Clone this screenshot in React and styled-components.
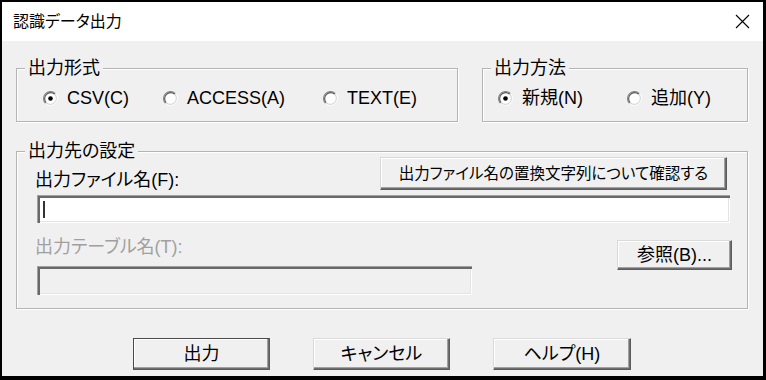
import React from 'react'
import styled, { createGlobalStyle } from 'styled-components'

const Global = createGlobalStyle`
  html, body {
    margin: 0;
    padding: 0;
    background: #f0f0f0;
  }
  * {
    box-sizing: border-box;
  }
`

const Window = styled.div`
  width: 766px;
  height: 380px;
  display: flex;
  flex-direction: column;
  background: #f0f0f0;
  border-style: solid;
  border-color: #000;
  border-width: 2px 3px 4px 2px;
  font-family: "Liberation Sans", "Noto Sans CJK JP", sans-serif;
  font-feature-settings: "palt";
  font-size: 18px;
  line-height: 20px;
  color: #000;
`

const TitleBar = styled.div`
  flex: none;
  height: 39px;
  display: flex;
  align-items: center;
  justify-content: space-between;
  padding: 0 13px 0 11px;
  background: #fff;
  font-size: 16px;
`

const Body = styled.div`
  flex: 1;
  display: flex;
  flex-direction: column;
  padding: 27px 15px 0 14px;
`

const TopRow = styled.div`
  display: flex;
  gap: 24px;
`

// etched group box; --pad lets the legend keep its place whatever the inner padding
const Group = styled.section`
  --pad: ${p => p.$left || 0}px;
  display: flex;
  flex-direction: column;
  border: 1px solid #b4b4b4;
  box-shadow: inset 1px 1px 0 #fff, 1px 1px 0 #fff;
  width: ${p => (p.$w ? `${p.$w}px` : 'auto')};
  flex: ${p => (p.$grow ? '1' : 'none')};
  margin-top: ${p => p.$top || 0}px;
  padding: 0 ${p => p.$right || 0}px ${p => p.$bottom || 0}px var(--pad);
`

const Legend = styled.div`
  align-self: flex-start;
  height: 20px;
  white-space: nowrap;
  margin: -11px 0 0 calc(8px - var(--pad));
  padding: 0 3px;
  background: #f0f0f0;
`

const RadioRow = styled.div`
  display: flex;
  align-items: center;
  margin-top: 10px;
  height: 20px;
`

const Option = styled.label`
  display: flex;
  align-items: center;
  gap: 9px;
  height: 20px;
  white-space: nowrap;
  width: ${p => (p.$w ? `${p.$w}px` : 'auto')};
  flex: none;
`

const FieldRow = styled.div`
  display: flex;
  align-items: flex-end;
  justify-content: space-between;
  margin-top: -4px;
  height: 33px;
`

const Label = styled.div`
  height: 20px;
  white-space: nowrap;
  margin-left: -2px;
  color: ${p => (p.$disabled ? '#a0a0a0' : '#000')};
`

const Button = styled.button`
  flex: none;
  width: ${p => p.$w}px;
  height: ${p => p.$h}px;
  margin: ${p => p.$m || 0};
  padding: 0;
  font: inherit;
  font-size: ${p => p.$fs || 18}px;
  font-feature-settings: "palt";
  white-space: nowrap;
  color: #000;
  background: #f0f0f0;
  border: ${p => (p.$default ? '1px solid #4a4a4a' : '1px solid #dadada')};
  border-right-color: #5c5c5c;
  border-bottom-color: #5c5c5c;
  box-shadow:
    inset -1px -1px 0 #6d6d6d,
    inset -2px -2px 0 #a0a0a0,
    inset 1px 1px 0 #fff;
`

const Field = styled.div`
  height: ${p => p.$h}px;
  width: ${p => (p.$w ? `${p.$w}px` : 'auto')};
  margin-top: ${p => p.$top || 0}px;
  display: flex;
  align-items: center;
  padding-left: 6px;
  background: ${p => (p.$disabled ? '#f0f0f0' : '#fff')};
  box-shadow:
    inset 1px 1px 0 #a0a0a0,
    inset 3px 3px 0 #696969,
    inset -1px -1px 0 #fff,
    inset -2px -2px 0 #e3e3e3;
`

const Caret = styled.span`
  width: 2px;
  height: 17px;
  background: #333;
`

const TableRow = styled.div`
  display: flex;
  align-items: flex-start;
  justify-content: space-between;
  margin-top: 14px;
`

const TableCol = styled.div`
  display: flex;
  flex-direction: column;
  gap: 9px;
`

const Actions = styled.div`
  display: flex;
  justify-content: center;
  gap: 43px;
  margin-top: 29px;
`

const RadioMark = ({ checked }) => (
  <svg width="15" height="15" viewBox="0 0 15 15">
    <circle cx="7.5" cy="7.5" r="6.5" fill="#fff" />
    <path d="M2.55 12.45 A7 7 0 0 1 12.45 2.55" fill="none" stroke="#8a8a8a" strokeWidth="1.1" />
    <path d="M12.45 2.55 A7 7 0 0 1 2.55 12.45" fill="none" stroke="#fcfcfc" />
    <path d="M3.26 11.74 A6 6 0 0 1 11.74 3.26" fill="none" stroke="#555" strokeWidth="1.1" />
    <path d="M11.74 3.26 A6 6 0 0 1 3.26 11.74" fill="none" stroke="#cfcfcf" />
    {checked && <circle cx="7.5" cy="7.5" r="2.3" fill="#000" />}
  </svg>
)

const CloseIcon = () => (
  <svg width="15" height="15" viewBox="0 0 15 15">
    <path d="M1 1 L14 14 M14 1 L1 14" stroke="#000" strokeWidth="1.1" fill="none" />
  </svg>
)

const Radio = ({ checked, w, children }) => (
  <Option $w={w}>
    <RadioMark checked={checked} />
    <span>{children}</span>
  </Option>
)

export default function App() {
  return (
    <>
      <Global />
      <Window>
        <TitleBar>
          <span>認識データ出力</span>
          <CloseIcon />
        </TitleBar>
        <Body>
          <TopRow>
            <Group $w={442} $left={26} $bottom={13}>
              <Legend>出力形式</Legend>
              <RadioRow>
                <Radio checked w={120}>CSV(C)</Radio>
                <Radio w={160}>ACCESS(A)</Radio>
                <Radio>TEXT(E)</Radio>
              </RadioRow>
            </Group>
            <Group $grow $left={15} $bottom={13}>
              <Legend>出力方法</Legend>
              <RadioRow>
                <Radio checked w={129}>新規(N)</Radio>
                <Radio>追加(Y)</Radio>
              </RadioRow>
            </Group>
          </TopRow>
          <Group $top={29} $left={20} $right={17} $bottom={13}>
            <Legend>出力先の設定</Legend>
            <FieldRow>
              <Label>出力ファイル名(F):</Label>
              <Button $w={347} $h={33} $fs={15.5} $m="0 3px 0 0">出力ファイル名の置換文字列について確認する</Button>
            </FieldRow>
            <Field $h={28} $top={5}>
              <Caret />
            </Field>
            <TableRow>
              <TableCol>
                <Label $disabled>出力テーブル名(T):</Label>
                <Field $h={29} $w={435} $disabled />
              </TableCol>
              <Button $w={115} $h={30} $m="3px -2px 0 0">参照(B)...</Button>
            </TableRow>
          </Group>
          <Actions>
            <Button $default $w={137} $h={32}>出力</Button>
            <Button $w={137} $h={32}>キャンセル</Button>
            <Button $w={138} $h={32}>ヘルプ(H)</Button>
          </Actions>
        </Body>
      </Window>
    </>
  )
}
